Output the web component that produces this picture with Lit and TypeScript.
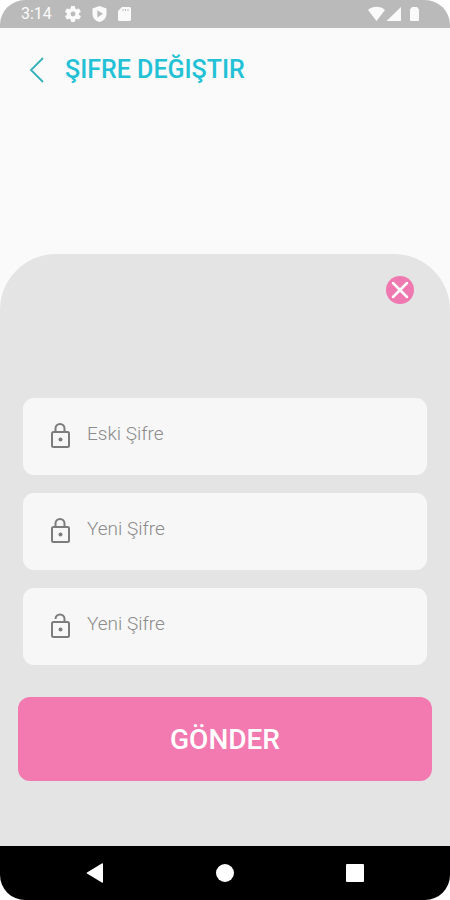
import { LitElement, html, css, svg } from "lit";
import { customElement, property } from "lit/decorators.js";

@customElement("status-bar")
class StatusBar extends LitElement {
  static styles = css`
    :host {
      display: flex;
      align-items: center;
      justify-content: space-between;
      box-sizing: border-box;
      height: 28px;
      padding: 0 29px 0 21px;
      background: #bababa;
      color: #fafafa;
    }
    .group {
      display: flex;
      align-items: center;
      gap: 11px;
    }
    .time {
      font-size: 16px;
      line-height: 28px;
      margin-right: 2px;
    }
    svg {
      display: block;
      fill: currentColor;
    }
  `;
  render() {
    return html`
      <div class="group">
        <span class="time">3:14</span>
        <svg width="16" height="16" viewBox="2 2 20 20" aria-hidden="true">
          <path d="M19.4 13c0-.3.1-.6.1-1s0-.7-.1-1l2.1-1.600c.2-.2.3-.4.1-.7l-2-3.400c-.1-.2-.4-.3-.6-.2l-2.500 1c-.5-.4-1.100-.7-1.700-1l-.4-2.600c0-.2-.2-.4-.5-.4h-4c-.2 0-.5.2-.5.400L9 5.100c-.6.300-1.200.600-1.700 1l-2.500-1c-.2-.1-.5 0-.6.200l-2 3.400c-.1.200-.1.500.1.700L4.500 11c0 .3-.1.600-.1 1s0 .700.1 1l-2.100 1.600c-.2.200-.3.400-.1.700l2 3.400c.1.200.4.300.6.200l2.500-1c.5.400 1.100.7 1.700 1l.4 2.600c0 .200.2.400.5.400h4c.2 0 .5-.2.500-.4l.4-2.600c.6-.3 1.200-.6 1.700-1l2.500 1c.2.100.5 0 .6-.2l2-3.400c.1-.2.100-.5-.1-.7L19.400 13zM12 15a3 3 0 1 1 0-6 3 3 0 0 1 0 6z" />
        </svg>
        <svg width="15" height="16" viewBox="0 0 15 16" aria-hidden="true">
          <path fill-rule="evenodd" d="M7.500 0 14.500 2.500V8c0 4-3 7-7 8-4-1-7-4-7-8V2.500zM5.300 4.200v7.200L11 7.800z" />
        </svg>
        <svg width="14" height="14" viewBox="0 0 14 14" aria-hidden="true">
          <path fill-rule="evenodd" d="M4 0h7.500A1.500 1.500 0 0 1 13 1.500v11a1.500 1.500 0 0 1-1.500 1.500h-10A1.500 1.500 0 0 1 0 12.500V4zM4.500 2v2h1V2zM7 2v2h1V2zM9.500 2v2h1V2z" />
        </svg>
      </div>
      <svg width="53" height="16" viewBox="0 0 53 16" aria-hidden="true">
        <path d="M0 4C5-.3 12-.3 17 4L8.500 15z" />
        <path d="M33 1v14H18.500z" />
        <path d="M42 3.500 44 1h5l2 2.500V14a1 1 0 0 1-1 1h-7a1 1 0 0 1-1-1z" />
      </svg>
    `;
  }
}

@customElement("password-field")
class PasswordField extends LitElement {
  @property() label = "";
  @property({ type: Boolean }) open = false;

  static styles = css`
    :host {
      display: block;
    }
    .field {
      display: flex;
      align-items: center;
      gap: 17px;
      box-sizing: border-box;
      height: 77px;
      padding: 0 20px 2px 27px;
      border-radius: 11px;
      background: #f7f7f7;
    }
    svg {
      display: block;
      flex: none;
      fill: none;
      stroke: #7c7c7c;
      stroke-width: 2;
    }
    .dot {
      fill: #7c7c7c;
      stroke: none;
    }
    input {
      flex: 1;
      min-width: 0;
      height: 40px;
      box-sizing: border-box;
      margin: 0;
      padding: 0 0 4px;
      border: 0;
      outline: 0;
      background: transparent;
      color: #444;
      font-family: Roboto, sans-serif;
      font-size: 19px;
      font-weight: 300;
    }
    input::placeholder {
      color: #8c8c8c;
      opacity: 1;
    }
  `;
  render() {
    const shackle = this.open
      ? svg`<path d="M5.500 6a4.500 4.500 0 0 1 9 0V9" />`
      : svg`<path d="M5.500 9V5.500a4.500 4.500 0 0 1 9 0V9" />`;
    return html`
      <label class="field">
        <svg width="20" height="26" viewBox="0 0 20 26" aria-hidden="true">
          ${shackle}
          <rect x="2" y="9" width="17" height="15" rx="1.500" />
          <circle class="dot" cx="10.500" cy="16.500" r="2" />
        </svg>
        <input type="password" placeholder=${this.label} aria-label=${this.label} />
      </label>
    `;
  }
}

@customElement("navigation-bar")
class NavigationBar extends LitElement {
  static styles = css`
    :host {
      display: grid;
      grid-template-columns: 1fr 1fr 1fr;
      align-items: center;
      box-sizing: border-box;
      height: 54px;
      padding: 0 30px;
      background: #000;
    }
    button {
      display: grid;
      place-items: center;
      height: 54px;
      padding: 0;
      border: 0;
      background: none;
    }
    svg {
      display: block;
      fill: #fff;
    }
  `;
  render() {
    return html`
      <button aria-label="Geri">
        <svg width="20" height="20" viewBox="0 0 20 20"><path d="M18 1v18a.8.8 0 0 1-1.200.6L2 10.600a.8.8 0 0 1 0-1.200L16.800.4A.8.8 0 0 1 18 1z" /></svg>
      </button>
      <button aria-label="Ana ekran">
        <svg width="18" height="18" viewBox="0 0 18 18"><circle cx="9" cy="9" r="9" /></svg>
      </button>
      <button aria-label="Son uygulamalar">
        <svg width="18" height="18" viewBox="0 0 18 18"><rect width="18" height="18" rx="1" /></svg>
      </button>
    `;
  }
}

@customElement("app-root")
class AppRoot extends LitElement {
  static styles = css`
    :host {
      display: block;
      background: #fff;
      font-family: Roboto, "Noto Sans", sans-serif;
    }
    .screen {
      display: flex;
      flex-direction: column;
      min-height: 100vh;
      border-radius: 25px;
      overflow: hidden;
      background: #fafafa;
    }
    .header {
      display: flex;
      align-items: center;
      gap: 20px;
      height: 84px;
      margin-bottom: 142px;
      padding: 0 29px;
      color: #22c1d6;
    }
    h1 {
      margin: 0;
      font-size: 25px;
      font-weight: 500;
      line-height: 34px;
    }
    .back,
    .close {
      display: block;
      padding: 0;
      border: 0;
      background: none;
    }
    .back svg,
    .close svg {
      display: block;
    }
    .sheet {
      flex: 1;
      display: flex;
      flex-direction: column;
      padding: 22px 18px 65px;
      border-radius: 56px 56px 0 0;
      background: #e4e4e4;
    }
    .close {
      align-self: flex-end;
      margin-right: 18px;
    }
    form {
      display: flex;
      flex-direction: column;
      margin-top: 94px;
    }
    .fields {
      display: flex;
      flex-direction: column;
      gap: 18px;
      padding: 0 5px;
    }
    .submit {
      height: 84px;
      margin-top: 32px;
      padding: 0;
      border: 0;
      border-radius: 12px;
      background: #f27ab1;
      color: #fff;
      font-family: inherit;
      font-size: 28px;
      font-weight: 500;
    }
  `;
  render() {
    return html`
      <div class="screen">
        <status-bar></status-bar>
        <header class="header">
          <button class="back" aria-label="Geri">
            <svg width="16" height="26" viewBox="0 0 16 26" fill="none" stroke="#35b0ba" stroke-width="1.800">
              <path d="M14 1 2 13l12 12" />
            </svg>
          </button>
          <h1>ŞIFRE DEĞIŞTIR</h1>
        </header>
        <main class="sheet">
          <button class="close" aria-label="Kapat">
            <svg width="28" height="28" viewBox="0 0 28 28">
              <circle cx="14" cy="14" r="14" fill="#ef78b0" />
              <path d="m7 7 14 14M21 7 7 21" stroke="#fff" stroke-width="2.500" stroke-linecap="round" />
            </svg>
          </button>
          <form>
            <div class="fields">
              <password-field label="Eski Şifre"></password-field>
              <password-field label="Yeni Şifre"></password-field>
              <password-field label="Yeni Şifre" open></password-field>
            </div>
            <button class="submit" type="button">GÖNDER</button>
          </form>
        </main>
        <navigation-bar></navigation-bar>
      </div>
    `;
  }
}
